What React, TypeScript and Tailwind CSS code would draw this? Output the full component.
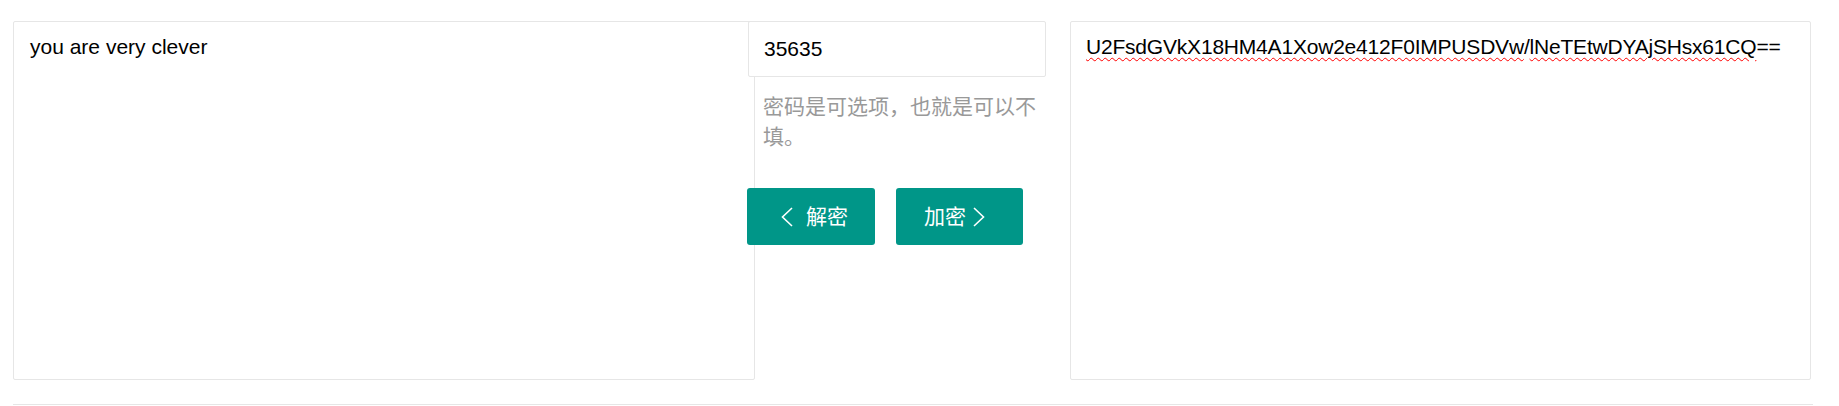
import React from 'react';

const font = { fontFamily: '"Liberation Sans", Arial, "Noto Sans CJK SC", sans-serif' };

function Chevron({ dir }: { dir: 'left' | 'right' }) {
  return (
    <svg width="12" height="20" viewBox="0 0 12 20" fill="none" className="shrink-0">
      <polyline
        points={dir === 'left' ? '11,1 1.5,10 11,19' : '1,1 10.5,10 1,19'}
        stroke="#fff"
        strokeWidth="1.6"
      />
    </svg>
  );
}

export default function App() {
  return (
    <div className="min-h-screen bg-white px-[13px] pt-[21px] text-[21px] text-black" style={font}>
      <div className="flex w-[1800px] items-start">
        <div className="h-[359px] w-[742px] shrink-0 rounded-[2px] border border-[#e6e6e6] bg-white px-[16px] pt-[10px] leading-[30px]">
          you are very clever
        </div>

        <div className="relative z-10 -ml-[7px] w-[298px] shrink-0">
          <div className="flex h-[56px] items-center rounded-[2px] border border-[#e6e6e6] bg-white px-[15px]">
            35635
          </div>
          <p className="pl-[15px] pt-[15px] leading-[30px] text-[#999]">密码是可选项，也就是可以不填。</p>
          <div className="-ml-px mt-[36px] flex gap-[21px]">
            <button
              type="button"
              className="flex h-[57px] w-[128px] items-center gap-[13px] rounded-[3px] bg-[#009688] pl-[34px] text-white"
            >
              <Chevron dir="left" />
              <span>解密</span>
            </button>
            <button
              type="button"
              className="flex h-[57px] w-[127px] items-center gap-[7px] rounded-[3px] bg-[#009688] pl-[28px] text-white"
            >
              <span>加密</span>
              <Chevron dir="right" />
            </button>
          </div>
        </div>

        <div className="ml-auto mr-[2px] h-[359px] w-[741px] shrink-0 rounded-[2px] border border-[#e6e6e6] bg-white px-[15px] pt-[10px] leading-[30px] tracking-[-0.2px]">
          <span className="underline decoration-[#ff0000] decoration-wavy decoration-1 underline-offset-[3px]">
            U2FsdGVkX18HM4A1Xow2e412F0IMPUSDVw
          </span>
          /
          <span className="underline decoration-[#ff0000] decoration-wavy decoration-1 underline-offset-[3px]">
            lNeTEtwDYAjSHsx61CQ
          </span>
          ==
        </div>
      </div>
      <div className="mt-[24px] w-[1800px] border-t border-[#e6e6e6]" />
    </div>
  );
}
